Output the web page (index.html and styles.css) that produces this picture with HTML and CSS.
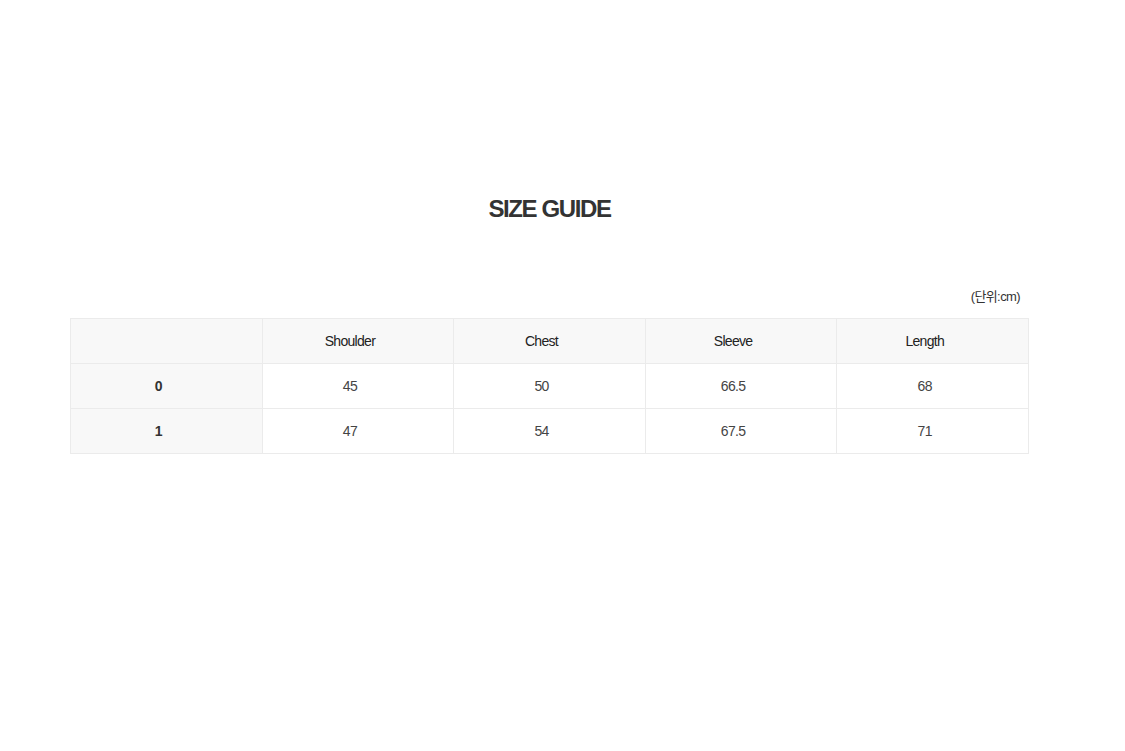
FILE: index.html
```html
<!DOCTYPE html>
<html lang="ko">
<head>
<meta charset="utf-8">
<link rel="stylesheet" href="styles.css">
</head>
<body>
<div class="page">
  <h1 class="title">SIZE GUIDE</h1>
  <div class="unit">(단위:cm)</div>
  <table class="size-table">
    <thead>
      <tr>
        <th class="corner"></th>
        <th>Shoulder</th>
        <th>Chest</th>
        <th>Sleeve</th>
        <th>Length</th>
      </tr>
    </thead>
    <tbody>
      <tr>
        <th class="row-head">0</th>
        <td>45</td>
        <td>50</td>
        <td>66.5</td>
        <td>68</td>
      </tr>
      <tr>
        <th class="row-head">1</th>
        <td>47</td>
        <td>54</td>
        <td>67.5</td>
        <td>71</td>
      </tr>
    </tbody>
  </table>
</div>
</body>
</html>
```
FILE: styles.css
```css
html, body {
  margin: 0;
  padding: 0;
  background: #ffffff;
}
body {
  font-family: "Liberation Sans", Arial, "Noto Sans CJK KR", sans-serif;
  color: #333333;
}
.page {
  width: 959px;
  margin-left: 70px;
  padding-top: 194px;
}
.title {
  margin: 0;
  text-align: center;
  font-size: 24px;
  font-weight: bold;
  letter-spacing: -1.4px;
  line-height: 30px;
  color: #333333;
}
.unit {
  margin-top: 65px;
  text-align: right;
  padding-right: 9px;
  font-size: 13px;
  letter-spacing: -0.6px;
  line-height: 16px;
  color: #333333;
}
.size-table {
  margin-top: 13px;
  width: 959px;
  border-collapse: collapse;
  table-layout: fixed;
}
.size-table th,
.size-table td {
  border: 1px solid #ebebeb;
  height: 44px;
  padding: 0 16px 0 0;
  text-align: center;
  font-size: 14px;
  letter-spacing: -0.7px;
  color: #333333;
}
.size-table thead th {
  background: #f8f8f8;
  font-weight: normal;
  color: #222222;
}
.size-table .row-head {
  background: #f8f8f8;
  font-weight: bold;
}
.size-table td {
  background: #ffffff;
  color: #444444;
}
```
